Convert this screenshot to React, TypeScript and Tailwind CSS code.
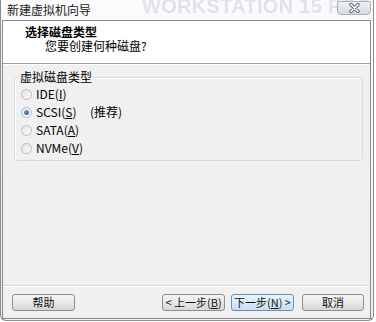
import React from "react";

const font = { fontFamily: '"Noto Sans CJK SC", "Liberation Sans", sans-serif' };

function Radio({ checked }: { checked?: boolean }) {
  return (
    <div className="w-[11px] h-[11px] rounded-full border border-[#b9bcc0] bg-gradient-to-br from-[#e4e4e4] to-[#fafafa] flex items-center justify-center shrink-0">
      {checked && <div className="w-[5px] h-[5px] rounded-full bg-gradient-to-br from-[#6fa6d8] to-[#1f5fa6]" />}
    </div>
  );
}

function Btn({ children, primary }: { children: React.ReactNode; primary?: boolean }) {
  return (
    <div
      className={
        "h-[17px] rounded-[3px] border flex items-center justify-center text-[11px] leading-none text-[#111] whitespace-nowrap " +
        (primary
          ? "border-[#5c93c4] bg-gradient-to-b from-[#eaf3fa] via-[#dbe9f5] to-[#c7ddee]"
          : "border-[#8e8f8f] bg-gradient-to-b from-[#f5f5f5] via-[#e8e8e8] to-[#d6d6d6]")
      }
    >
      <span className="whitespace-nowrap">{children}</span>
    </div>
  );
}

export default function App() {
  return (
    <div className="w-[376px] h-[322px] bg-white overflow-hidden" style={font}>
      <div className="w-[374px] h-[321px] flex flex-col border border-t-0 border-[#8c8c8c] rounded-b-[6px] bg-gradient-to-b from-[#fbfafc] to-[#eeedf2] pl-[1px] pr-[2px] pb-[1px]">
        {/* title bar */}
        <div className="relative h-[20px] shrink-0 overflow-hidden">
          <div className="absolute left-[140px] top-[-9px] text-[20px] font-bold tracking-[0.3px] text-[#e6dfec] blur-[0.7px] whitespace-nowrap" style={{ fontFamily: '"Liberation Sans", sans-serif' }}>
            WORKSTATION 15 PRO
          </div>
          <div className="absolute left-[5px] top-[3px] text-[12px] leading-[14px] text-[#1a1a1a]">新建虚拟机向导</div>
          <div className="absolute right-[0px] top-[1px] w-[34px] h-[14px] rounded-b-[4px] rounded-t-[2px] border border-[#a7b0ba] bg-gradient-to-b from-[#eef1f4] to-[#d4dbe1] flex items-center justify-center">
            <svg width="11" height="10" viewBox="0 0 11 10">
              <path d="M2 1.5 L9 8.5 M9 1.5 L2 8.5" stroke="#5a6470" strokeWidth="3.4" strokeLinecap="round" />
              <path d="M2 1.5 L9 8.5 M9 1.5 L2 8.5" stroke="#ffffff" strokeWidth="1.6" strokeLinecap="round" />
            </svg>
          </div>
        </div>
        {/* client */}
        <div className="flex-1 flex flex-col border border-[#8a8a8a] bg-[#f0f0f0]">
          <div className="h-[43px] shrink-0 bg-white border-b border-[#a0a0a0] flex flex-col pt-[4px]">
            <div className="pl-[22px] text-[12px] leading-[13px] font-bold text-black">选择磁盘类型</div>
            <div className="pl-[42px] mt-[1px] text-[12px] leading-[13px] text-black">您要创建何种磁盘?</div>
          </div>
          <div className="flex-1 border-t border-white pt-[12px] pl-[11px] pr-[7px]">
            <div className="relative h-[84px] rounded-[3px] border border-[#d5dbe0] shadow-[inset_1px_1px_0_#ffffff]">
              <div className="absolute left-[4px] top-[-8px] px-[1px] bg-[#f0f0f0] text-[12px] leading-[14px] text-black">虚拟磁盘类型</div>
              <div className="flex flex-col pt-[9px] pl-[6px] gap-[4px] text-[12px] leading-[14px] text-black">
                <div className="flex items-center gap-[4px] h-[14px]"><Radio /><span>IDE(<u>I</u>)</span></div>
                <div className="flex items-center gap-[4px] h-[14px]"><Radio checked /><span className="w-[50px]">SCSI(<u>S</u>)</span><span>(推荐)</span></div>
                <div className="flex items-center gap-[4px] h-[14px]"><Radio /><span>SATA(<u>A</u>)</span></div>
                <div className="flex items-center gap-[4px] h-[14px]"><Radio /><span>NVMe(<u>V</u>)</span></div>
              </div>
            </div>
          </div>
          <div className="h-[33px] shrink-0 border-t border-[#d8d8d8] shadow-[inset_0_1px_0_#ffffff] pt-[8px] pl-[9px] pr-[6px] flex">
            <div className="w-[63px]"><Btn>帮助</Btn></div>
            <div className="flex-1" />
            <div className="w-[63px]"><Btn>&lt; 上一步(<u>B</u>)</Btn></div>
            <div className="w-[63px] ml-[6px]"><Btn primary>下一步(<u>N</u>) &gt;</Btn></div>
            <div className="w-[62px] ml-[8px]"><Btn>取消</Btn></div>
          </div>
        </div>
      </div>
    </div>
  );
}
